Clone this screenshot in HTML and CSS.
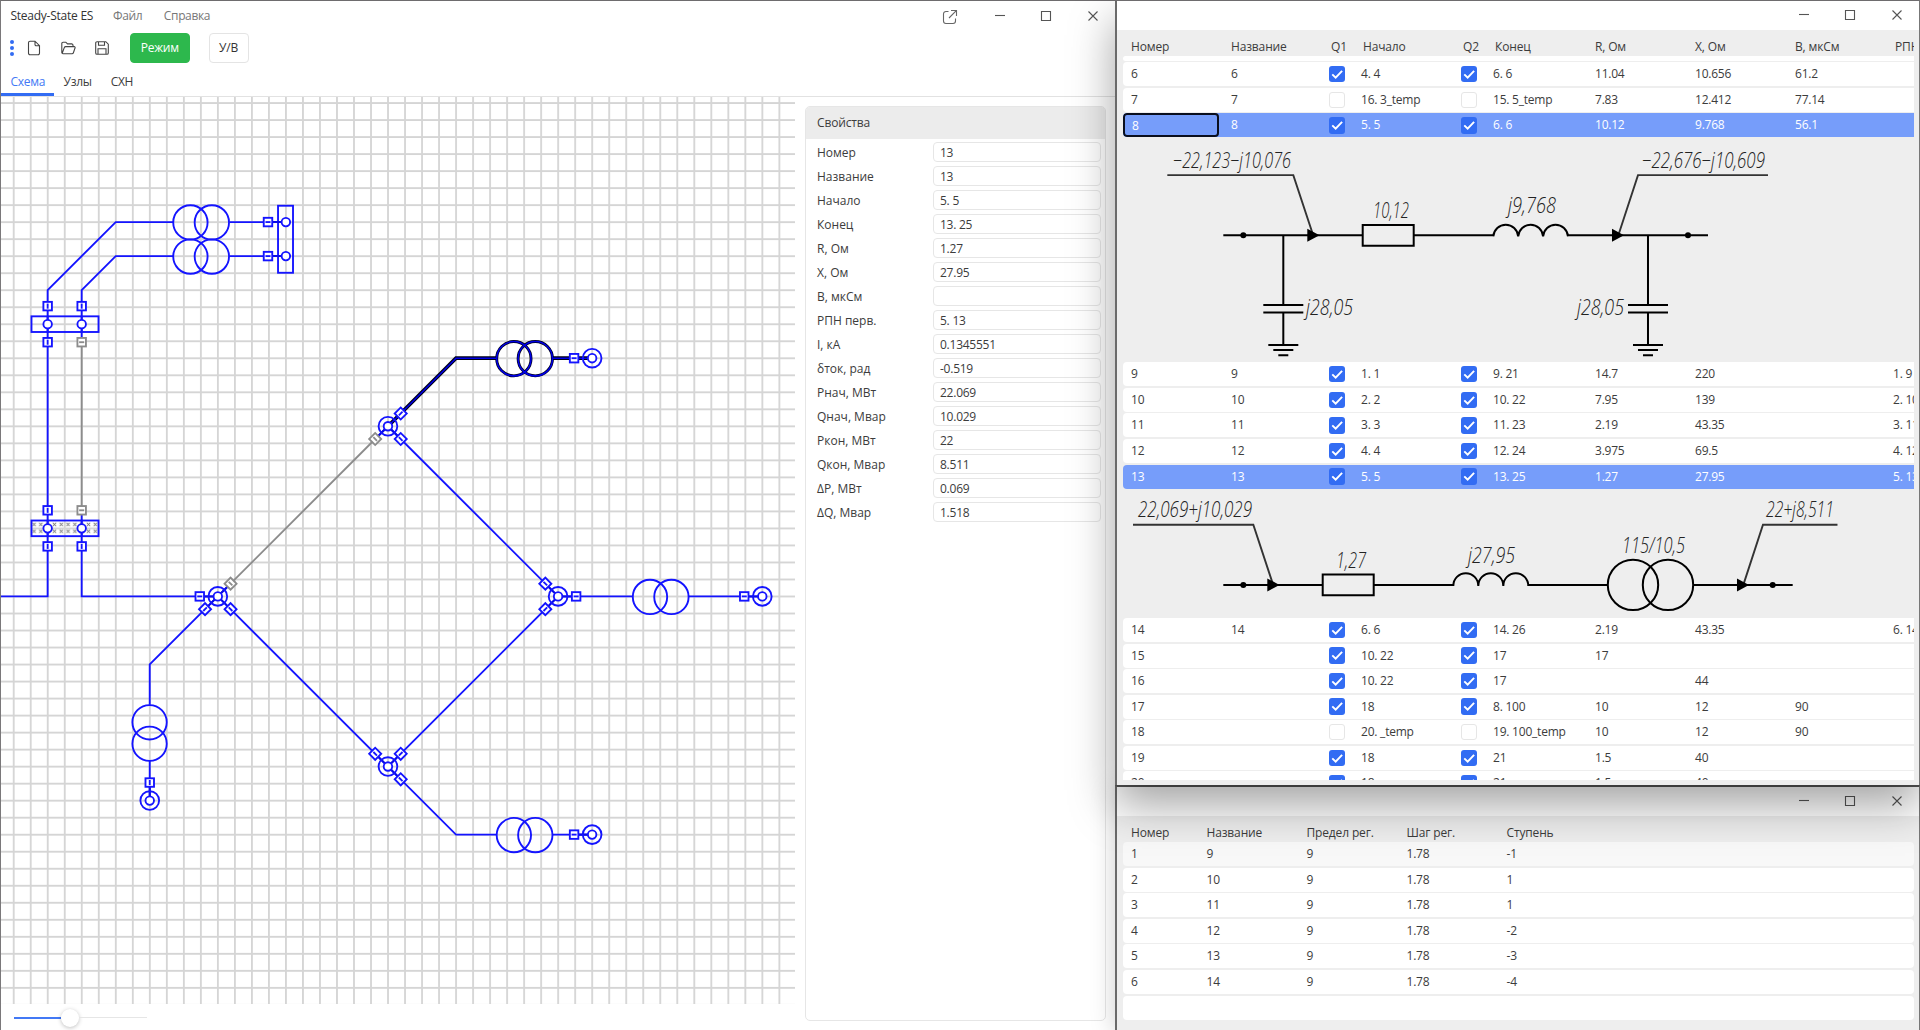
FILE: index.html
```html
<!DOCTYPE html>
<html lang="ru">
<head>
<meta charset="utf-8">
<title>Steady-State ES</title>
<link rel="stylesheet" href="styles.css">
</head>
<body>
<svg class="defs" width="0" height="0" aria-hidden="true">
  <defs>
    <symbol id="i-min" viewBox="0 0 12 12"><path d="M1 5.5H11"/></symbol>
    <symbol id="i-max" viewBox="0 0 12 12"><path d="M1.5 1.5h9v9h-9z"/></symbol>
    <symbol id="i-close" viewBox="0 0 12 12"><path d="M1.5 1.5l9 9M10.5 1.5l-9 9"/></symbol>
    <symbol id="i-check" viewBox="0 0 16 16"><path d="M3.2 8.2l3.3 3.2 6.3-6.6"/></symbol>
  </defs>
</svg>

<main class="desktop">
  <section class="window main-window">
    <header class="titlebar">
      <span class="app-name">Steady-State ES</span>
      <nav class="menu"><span>Файл</span><span>Справка</span></nav>
      <div class="controls">
        <svg class="share" viewBox="0 0 16 16"><path d="M6.5 2.5H4a2.5 2.5 0 0 0-2.5 2.5v7A2.5 2.5 0 0 0 4 14.5h7a2.5 2.5 0 0 0 2.5-2.5V9.500M9 1.500h5.500V7M14.300 1.700L7 9"/></svg>
        <svg><use href="#i-min"/></svg><svg class="max"><use href="#i-max"/></svg><svg><use href="#i-close"/></svg>
      </div>
    </header>
    <div class="toolbar">
      <svg class="grip" viewBox="0 0 4 16"><circle cx="2" cy="2" r="2"/><circle cx="2" cy="8" r="2"/><circle cx="2" cy="14" r="2"/></svg>
      <svg class="tool new" viewBox="0 0 16 16"><path d="M4 1.200h5l4.500 4.500v7.500a1.500 1.500 0 0 1-1.500 1.500H4a1.500 1.500 0 0 1-1.500-1.500V2.700A1.500 1.500 0 0 1 4 1.200zM9 1.200v3.300a1.200 1.200 0 0 0 1.200 1.200h3.300"/></svg>
      <svg class="tool open" viewBox="0 0 16 16"><path d="M1.800 12.800V3.500a1.300 1.300 0 0 1 1.300-1.300h2.700l1.700 1.700h4.200A1.300 1.300 0 0 1 13 5.200v1.300M2 13.800L4.300 7.600a1.500 1.500 0 0 1 1.400-1h8.500a.9.900 0 0 1 .9 1.200l-1.700 5a1.500 1.500 0 0 1-1.400 1H3a1.200 1.200 0 0 1-1.200-1.200"/></svg>
      <svg class="tool save" viewBox="0 0 16 16"><path d="M3 1.700h8.800l2.500 2.500V13a1.300 1.300 0 0 1-1.300 1.300H3A1.300 1.300 0 0 1 1.700 13V3A1.300 1.300 0 0 1 3 1.700zM4.500 1.700v3.600h6V1.700M4 14.300V8.800h8v5.500"/></svg>
      <button class="btn primary">Режим</button>
      <button class="btn">У/В</button>
    </div>
    <nav class="tabs"><span class="tab active">Схема</span><span class="tab">Узлы</span><span class="tab">СХН</span></nav>
    <div class="workspace">
      <div class="canvas-col">
        <svg class="scheme" viewBox="1 97 794 907">
          <defs>
            <pattern id="grid" x="-0.5" y="-0.5" width="10" height="10" patternUnits="userSpaceOnUse"><path class="grid-line" d="M0 .5H10M.5 0V10"/></pattern>
            <pattern id="hatch" x="-110" y="-44.300" width="4" height="4" patternUnits="userSpaceOnUse"><path class="hatch" d="M1 1L3 3M3 1L1 3"/></pattern>
            <g id="sw"><rect x="-2.500" y="-2.500" width="5" height="5"/><path d="M-1.500 0H1.500"/></g>
            <g id="node"><circle class="clear" r="5.500"/><circle r="2.500"/></g>
            <circle id="ring" r="2.500"/>
            <g id="tr"><circle cx="-6.300" r="10.100"/><circle cx="6.300" r="10.100"/></g>
          </defs>
          <g transform="translate(217.800 596.400) scale(1.7015)">
            <rect x="-130" y="-300" width="470" height="545" fill="url(#grid)"/>
            <g class="wire">
              <path d="M-100 -160V-180L-60 -220H-26M7 -220H40M-80 -160V-180L-60 -200H-26M7 -200H40"/>
              <path d="M-100 -160V0H-130M-80 -160V-150M-80 -50V0H0M0 0L100 100L200 0L100 -100M200 0H243.500M276.500 0H320M0 0L-40 40V63.700M-40 96.500V120M100 100L140 140H163.700M196.500 140H220M0 0L7 -7M100 -100L93 -93"/>
              <rect x="-109.500" y="-164.600" width="39.400" height="9.200"/>
              <rect x="-109.500" y="-44.600" width="39.400" height="9.200" fill="url(#hatch)"/>
              <rect x="35.400" y="-229.600" width="8.800" height="39.400"/>
              <path d="M-100 -165V-155M-80 -165V-155M-100 -45V-35M-80 -45V-35"/>
              <use href="#tr" x="-9.800" y="-219.800"/><use href="#tr" x="-9.800" y="-199.700"/>
              <use href="#tr" x="260.300" y=".3"/><use href="#tr" x="180.300" y="140.300"/>
              <use href="#tr" transform="translate(-40.100 80.300) rotate(90)"/>
            </g>
            <g class="off"><path d="M-80 -149.400V-50.600M7.500 -7.500L92.500 -92.500"/></g>
            <g class="picked"><path d="M100 -100L140 -140H163.700M196.800 -140H220"/><use class="picked-ring" href="#tr" x="180.300" y="-139.700"/></g>
            <g class="picked-core"><path d="M100 -100L140 -140H163.700M196.800 -140H220"/><use href="#tr" x="180.300" y="-139.700"/></g>
            <g class="stub"><path d="M31 -220H40M31 -200H40M-8 0H0M200 0H208M312 0H320M212 140H220M-40 112V120M0 0L6 6M0 0L-6 6M0 0L6 -6M100 100L94 94M100 100L106 94M100 100L106 106M200 0L194 -6M200 0L194 6M100 -100L106 -94M100 -100L94 -94"/></g>
            <g class="mark">
              <use href="#node"/><use href="#node" x="100" y="-100"/><use href="#node" x="200"/><use href="#node" x="100" y="100"/><use href="#node" x="320"/><use href="#node" x="220" y="-140"/><use href="#node" x="220" y="140"/><use href="#node" x="-40" y="120"/>
              <use href="#ring" x="-100" y="-160"/><use href="#ring" x="-80" y="-160"/><use href="#ring" x="-100" y="-40"/><use href="#ring" x="-80" y="-40"/><use href="#ring" x="40" y="-220"/><use href="#ring" x="40" y="-200"/>
              <use href="#sw" x="29.500" y="-220"/><use href="#sw" x="29.500" y="-200"/><use href="#sw" x="-10.600"/><use href="#sw" x="210.600"/><use href="#sw" x="309.400"/><use href="#sw" x="209.400" y="-140"/><use href="#sw" x="209.400" y="140"/>
              <use href="#sw" transform="translate(-100 -170.600) rotate(90)"/><use href="#sw" transform="translate(-80 -170.600) rotate(90)"/>
              <use href="#sw" transform="translate(-100 -149.400) rotate(90)"/><use href="#sw" transform="translate(-100 -50.600) rotate(90)"/>
              <use href="#sw" transform="translate(-100 -29.400) rotate(90)"/><use href="#sw" transform="translate(-80 -29.400) rotate(90)"/>
              <use href="#sw" transform="translate(-40 109.400) rotate(90)"/>
              <use href="#sw" transform="translate(-7.500 7.500) rotate(-45)"/><use href="#sw" transform="translate(7.500 7.500) rotate(45)"/>
              <use href="#sw" transform="translate(92.500 92.500) rotate(45)"/><use href="#sw" transform="translate(107.500 92.500) rotate(-45)"/><use href="#sw" transform="translate(107.500 107.500) rotate(45)"/>
              <use href="#sw" transform="translate(192.500 -7.500) rotate(45)"/><use href="#sw" transform="translate(192.500 7.500) rotate(-45)"/>
              <use href="#sw" transform="translate(107.500 -107.500) rotate(-45)"/><use href="#sw" transform="translate(107.500 -92.500) rotate(45)"/>
            </g>
            <g class="mark off">
              <use href="#sw" x="-80" y="-149.400"/><use href="#sw" x="-80" y="-50.600"/>
              <use href="#sw" transform="translate(7.500 -7.500) rotate(45)"/><use href="#sw" transform="translate(92.500 -92.500) rotate(45)"/>
            </g>
          </g>
        </svg>
        <div class="slider"><div class="slider-fill"></div><div class="slider-thumb"></div><div class="slider-rest"></div></div>
      </div>
      <aside class="props">
        <h2>Свойства</h2>
        <dl>
          <dt>Номер</dt><dd>13</dd>
          <dt>Название</dt><dd>13</dd>
          <dt>Начало</dt><dd>5. 5</dd>
          <dt>Конец</dt><dd>13. 25</dd>
          <dt>R, Ом</dt><dd>1.27</dd>
          <dt>X, Ом</dt><dd>27.95</dd>
          <dt>B, мкСм</dt><dd></dd>
          <dt>РПН перв.</dt><dd>5. 13</dd>
          <dt>I, кА</dt><dd>0.1345551</dd>
          <dt>δток, рад</dt><dd>-0.519</dd>
          <dt>Pнач, МВт</dt><dd>22.069</dd>
          <dt>Qнач, Мвар</dt><dd>10.029</dd>
          <dt>Pкон, МВт</dt><dd>22</dd>
          <dt>Qкон, Мвар</dt><dd>8.511</dd>
          <dt>ΔP, МВт</dt><dd>0.069</dd>
          <dt>ΔQ, Мвар</dt><dd>1.518</dd>
        </dl>
      </aside>
    </div>
  </section>

  <div class="side">
    <section class="window branches">
      <header class="titlebar"><div class="controls"><svg><use href="#i-min"/></svg><svg class="max"><use href="#i-max"/></svg><svg><use href="#i-close"/></svg></div></header>
      <div class="table wide">
        <div class="head"><span>Номер</span><span>Название</span><span>Q1</span><span>Начало</span><span>Q2</span><span>Конец</span><span>R, Ом</span><span>X, Ом</span><span>B, мкСм</span><span>РПН</span></div>
        <div class="rows">
          <div class="row-tail"></div>
          <div class="row"><span>6</span><span>6</span><svg class="cb on"><use href="#i-check"/></svg><span class="n">4. 4</span><svg class="cb on"><use href="#i-check"/></svg><span class="n">6. 6</span><span>11.04</span><span>10.656</span><span>61.2</span><span></span></div>
          <div class="row"><span>7</span><span>7</span><svg class="cb"></svg><span class="n">16. 3_temp</span><svg class="cb"></svg><span class="n">15. 5_temp</span><span>7.83</span><span>12.412</span><span>77.14</span><span></span></div>
          <div class="row sel"><span class="focus">8</span><span>8</span><svg class="cb on"><use href="#i-check"/></svg><span class="n">5. 5</span><svg class="cb on"><use href="#i-check"/></svg><span class="n">6. 6</span><span>10.12</span><span>9.768</span><span>56.1</span><span></span></div>
          <svg class="detail line" viewBox="1123 137.700 790.600 221.700">
            <path d="M1223.300 234H1362.700M1413.700 234H1493.300V235A12.500 12.700 0 0 1 1518.200 235A12.500 12.700 0 0 1 1543.100 235A12.500 12.700 0 0 1 1568 235V234H1708M1362.700 223.700h51v20.700h-51z"/>
            <path d="M1283.300 234V303.700M1263.300 303.700H1303.300M1263.300 311.300H1303.300M1283.300 311.300V343.700M1268.300 343.700H1298.300M1273.300 348.700H1293.300M1278.300 354H1288.300M1648 234V303.700M1628 303.700H1668M1628 311.300H1668M1648 311.300V343.700M1633 343.700H1663M1638 348.700H1658M1643 354H1653"/>
            <path class="leader" d="M1167.300 173.800H1293.300L1312.500 232M1768 173.800H1638L1619 232"/>
            <path class="solid" d="M1307.300 227.500L1319.500 234L1307.300 240.500zM1612 227.500L1624 234L1612 240.500z"/>
            <circle class="solid" cx="1243.300" cy="234" r="3"/><circle class="solid" cx="1688" cy="234" r="3"/>
            <text x="1173" y="166.700" textLength="118" lengthAdjust="spacingAndGlyphs">−22,123−j10,076</text>
            <text x="1642" y="166.700" textLength="123" lengthAdjust="spacingAndGlyphs">−22,676−j10,609</text>
            <text x="1373" y="216.700" textLength="36" lengthAdjust="spacingAndGlyphs">10,12</text>
            <text x="1508" y="212" textLength="48" lengthAdjust="spacingAndGlyphs">j9,768</text>
            <text x="1306" y="313.500" textLength="47" lengthAdjust="spacingAndGlyphs">j28,05</text>
            <text x="1577" y="313.500" textLength="47" lengthAdjust="spacingAndGlyphs">j28,05</text>
          </svg>
          <div class="row"><span>9</span><span>9</span><svg class="cb on"><use href="#i-check"/></svg><span class="n">1. 1</span><svg class="cb on"><use href="#i-check"/></svg><span class="n">9. 21</span><span>14.7</span><span>220</span><span></span><span class="n">1. 9</span></div>
          <div class="row"><span>10</span><span>10</span><svg class="cb on"><use href="#i-check"/></svg><span class="n">2. 2</span><svg class="cb on"><use href="#i-check"/></svg><span class="n">10. 22</span><span>7.95</span><span>139</span><span></span><span class="n">2. 10</span></div>
          <div class="row"><span>11</span><span>11</span><svg class="cb on"><use href="#i-check"/></svg><span class="n">3. 3</span><svg class="cb on"><use href="#i-check"/></svg><span class="n">11. 23</span><span>2.19</span><span>43.35</span><span></span><span class="n">3. 11</span></div>
          <div class="row"><span>12</span><span>12</span><svg class="cb on"><use href="#i-check"/></svg><span class="n">4. 4</span><svg class="cb on"><use href="#i-check"/></svg><span class="n">12. 24</span><span>3.975</span><span>69.5</span><span></span><span class="n">4. 12</span></div>
          <div class="row sel"><span>13</span><span>13</span><svg class="cb on"><use href="#i-check"/></svg><span class="n">5. 5</span><svg class="cb on"><use href="#i-check"/></svg><span class="n">13. 25</span><span>1.27</span><span>27.95</span><span></span><span class="n">5. 13</span></div>
          <svg class="detail transformer" viewBox="1123 490.100 790.600 126.100">
            <path d="M1223.300 585H1322.700M1373.700 585H1453.300V586A12.500 12.700 0 0 1 1478.300 586A12.500 12.700 0 0 1 1503.300 586A12.500 12.700 0 0 1 1528.300 586V585H1607.700M1693.300 585H1792.700M1322.700 574.700h51v20.700h-51z"/>
            <circle cx="1633" cy="585" r="25.200"/><circle cx="1668" cy="585" r="25.200"/>
            <path class="leader" d="M1133 524.800H1253.300L1272.500 583M1837.500 524.800H1763L1744 583"/>
            <path class="solid" d="M1267.300 578.500L1279.500 585L1267.300 591.500zM1737 578.500L1749 585L1737 591.500z"/>
            <circle class="solid" cx="1243.300" cy="585" r="3"/><circle class="solid" cx="1772.700" cy="585" r="3"/>
            <text x="1138" y="517.300" textLength="114" lengthAdjust="spacingAndGlyphs">22,069+j10,029</text>
            <text x="1336" y="568" textLength="30" lengthAdjust="spacingAndGlyphs">1,27</text>
            <text x="1468" y="563.300" textLength="47" lengthAdjust="spacingAndGlyphs">j27,95</text>
            <text x="1622" y="553" textLength="63" lengthAdjust="spacingAndGlyphs">115/10,5</text>
            <text x="1766" y="517.300" textLength="68" lengthAdjust="spacingAndGlyphs">22+j8,511</text>
          </svg>
          <div class="row"><span>14</span><span>14</span><svg class="cb on"><use href="#i-check"/></svg><span class="n">6. 6</span><svg class="cb on"><use href="#i-check"/></svg><span class="n">14. 26</span><span>2.19</span><span>43.35</span><span></span><span class="n">6. 14</span></div>
          <div class="row"><span>15</span><span></span><svg class="cb on"><use href="#i-check"/></svg><span class="n">10. 22</span><svg class="cb on"><use href="#i-check"/></svg><span class="n">17</span><span>17</span><span></span><span></span><span></span></div>
          <div class="row"><span>16</span><span></span><svg class="cb on"><use href="#i-check"/></svg><span class="n">10. 22</span><svg class="cb on"><use href="#i-check"/></svg><span class="n">17</span><span></span><span>44</span><span></span><span></span></div>
          <div class="row"><span>17</span><span></span><svg class="cb on"><use href="#i-check"/></svg><span class="n">18</span><svg class="cb on"><use href="#i-check"/></svg><span class="n">8. 100</span><span>10</span><span>12</span><span>90</span><span></span></div>
          <div class="row"><span>18</span><span></span><svg class="cb"></svg><span class="n">20. _temp</span><svg class="cb"></svg><span class="n">19. 100_temp</span><span>10</span><span>12</span><span>90</span><span></span></div>
          <div class="row"><span>19</span><span></span><svg class="cb on"><use href="#i-check"/></svg><span class="n">18</span><svg class="cb on"><use href="#i-check"/></svg><span class="n">21</span><span>1.5</span><span>40</span><span></span><span></span></div>
          <div class="row"><span>20</span><span></span><svg class="cb on"><use href="#i-check"/></svg><span class="n">18</span><svg class="cb on"><use href="#i-check"/></svg><span class="n">21</span><span>1.5</span><span>40</span><span></span><span></span></div>
        </div>
      </div>
    </section>

    <section class="window taps">
      <header class="titlebar"><div class="controls"><svg><use href="#i-min"/></svg><svg class="max"><use href="#i-max"/></svg><svg><use href="#i-close"/></svg></div></header>
      <div class="table narrow">
        <div class="head"><span>Номер</span><span>Название</span><span>Предел рег.</span><span>Шаг рег.</span><span>Ступень</span></div>
        <div class="rows">
          <div class="row hover"><span>1</span><span>9</span><span>9</span><span>1.78</span><span>-1</span></div>
          <div class="row"><span>2</span><span>10</span><span>9</span><span>1.78</span><span>1</span></div>
          <div class="row"><span>3</span><span>11</span><span>9</span><span>1.78</span><span>1</span></div>
          <div class="row"><span>4</span><span>12</span><span>9</span><span>1.78</span><span>-2</span></div>
          <div class="row"><span>5</span><span>13</span><span>9</span><span>1.78</span><span>-3</span></div>
          <div class="row"><span>6</span><span>14</span><span>9</span><span>1.78</span><span>-4</span></div>
          <div class="row"></div>
        </div>
      </div>
    </section>
  </div>
</main>
</body>
</html>
```
FILE: styles.css
```css
* { box-sizing: border-box; }

body {
  margin: 0;
  width: 1920px;
  height: 1030px;
  overflow: hidden;
  font: 12px/16px "Open Sans", "Noto Sans", sans-serif;
  letter-spacing: -0.22px;
  color: #3c3c3c;
  background: #fff;
}

.defs { position: absolute; }
.desktop { display: flex; height: 1030px; }

.window { display: flex; flex-direction: column; border-top: 1px solid #6e6c6e; }
.main-window { width: 1115px; border-left: 1px solid #7a787a; background: #fff; }

.side { display: flex; flex-direction: column; width: 805px; }
.side .window {
  background: #eee;
  border-left: 2px solid #6a6a6a;
  border-right: 1px solid #777;
}
.branches {
  position: relative;
  z-index: 2;
  height: 785px;
  box-shadow: 0 20px 42px rgba(0, 0, 0, .36);
}
.taps {
  position: relative;
  z-index: 1;
  flex: 1;
  box-shadow: 0 2px 24px rgba(0, 0, 0, .2);
}
.side .taps { border-top: 2px solid #555; }

/* title bars */
.titlebar { display: flex; align-items: center; flex: none; height: 29px; background: #fff; }
.side .titlebar { padding-bottom: 1px; }
.main-window .titlebar { height: 30px; padding-left: 9.500px; }
.app-name { width: 102.500px; color: #333; letter-spacing: -0.25px; }
.menu { display: flex; gap: 21.500px; color: #777; letter-spacing: -0.35px; }
.controls { display: flex; align-items: center; gap: 34.500px; margin-left: auto; padding-right: 16px; }
.controls svg { width: 12px; height: 12px; fill: none; stroke: #555; stroke-width: 1.1; }
.controls .max { margin: 0 1px 0 -1px; }
.controls .share { width: 16px; height: 16px; margin: 1px 2px 0 0; stroke: #666; }

/* toolbar */
.toolbar { display: flex; align-items: center; flex: none; height: 34px; padding-left: 9px; }
.grip { width: 4px; height: 16px; fill: #326cf3; }
.tool { width: 16px; height: 16px; fill: none; stroke: #444; stroke-width: 1.1; }
.new { margin-left: 11.500px; }
.open { margin-left: 18.500px; }
.save { margin-left: 18px; }
.btn {
  width: 40px;
  height: 30px;
  padding: 0;
  font: inherit;
  letter-spacing: inherit;
  color: #333;
  background: #fff;
  border: 1px solid #e4e4e4;
  border-radius: 4px;
}
.btn.primary { width: 59.500px; margin: 0 19px 0 20px; color: #fff; background: #2db84d; border-color: #2db84d; }

/* tabs */
.tabs { display: flex; flex: none; height: 32px; border-bottom: 1px solid #e2e2e2; letter-spacing: -0.3px; }
.tab { padding: 9px 9.500px 0; border-bottom: 3px solid transparent; }
.tab.active { padding-right: 9px; color: #4379f5; border-color: #326cf3; }

/* network diagram */
.workspace { display: flex; flex: 1; min-height: 0; }
.canvas-col { width: 794px; }
.scheme { display: block; width: 794px; height: 907px; }
.grid-line { fill: none; stroke: #d5d5d5; stroke-width: 1.15; }
.hatch { fill: none; stroke: #777; stroke-width: .6; }
.wire { fill: none; stroke: #1414ff; stroke-width: 1.1; }
.stub { fill: none; stroke: #0a0ae6; stroke-width: 1.2; }
.off { fill: none; stroke: #8c8c8c; stroke-width: 1.1; }
.picked { fill: none; stroke: #000014; stroke-width: 2.200; }
.picked-ring { stroke-width: 1.700; }
.picked-core { fill: none; stroke: #0000e6; stroke-width: .9; }
.mark { fill: #fff; stroke: #1414ff; stroke-width: 1.1; }
.mark.off { stroke: #8c8c8c; }
.clear { fill: none; }

.slider { display: flex; align-items: center; width: 133px; height: 20px; margin: 3.500px 0 0 13px; }
.slider-fill { width: 47px; height: 2px; background: #4379f5; }
.slider-thumb { width: 18px; height: 18px; border-radius: 50%; background: #fff; box-shadow: 0 1px 4px rgba(0, 0, 0, .25); }
.slider-rest { flex: 1; height: 1px; background: #e6e6e6; }

/* properties */
.props { width: 301px; height: 915px; margin: 9px 0 0 10px; border: 1px solid #e6e6e6; border-radius: 5px; overflow: hidden; letter-spacing: 0; }
.props h2 { margin: 0; height: 32px; padding: 8px 11px; background: #ececec; font: inherit; letter-spacing: -0.15px; }
.props dl { display: grid; grid-template-columns: 116px 168px; grid-auto-rows: 20px; row-gap: 4px; margin: 3px 0 0 11px; }
.props dt { line-height: 21px; }
.props dd { margin: 0; padding-left: 6px; line-height: 19px; letter-spacing: -0.25px; border: 1px solid #e6e6e6; border-radius: 4px; }

/* tables */
.table { padding: 0 5px 0 6px; }
.head, .row { display: grid; }
.wide .head, .wide .row { grid-template-columns: 100px 100px 32px 100px 32px 100px 100px 100px 100px 27px; }
.narrow .head, .narrow .row { grid-template-columns: 75.500px repeat(3, 100px) 1fr; }
.head { height: 26px; padding-top: 8.500px; letter-spacing: -0.15px; }
.head span, .row span { padding-left: 8px; white-space: nowrap; overflow: hidden; }
.row span.n { padding-left: 6px; }
.row {
  height: 24px;
  margin-bottom: 1.600px;
  line-height: 24px;
  background: #fff;
  border-radius: 4px;
  overflow: hidden;
}
.wide .rows { height: 724px; overflow: hidden; }
.wide .row, .row-tail { border-radius: 4px 0 0 4px; }
.row-tail { height: 4.500px; margin-bottom: 1.700px; background: #fff; }
.row.sel { color: #fff; background: #769dfa; }
.row.hover { background: #f8f8f8; }
.row .focus { padding-left: 7px; line-height: 22px; width: 96px; border: 2px solid #0a0f1e; border-radius: 4px; }
.cb { width: 16.400px; height: 16.400px; margin: 3.800px 0 0 6px; border: 1px solid #e6e6e6; border-radius: 3px; }
.cb.on { background: #326cf3; border: 0; fill: none; stroke: #fff; stroke-width: 1.900; }

/* equivalent circuits */
.detail { display: block; width: 790.600px; margin-bottom: 1.600px; fill: none; stroke: #000; stroke-width: 2; }
.line { height: 221.700px; }
.transformer { height: 126.100px; }
.leader { stroke: #333; stroke-width: 1.900; }
.solid { fill: #000; stroke: none; }
.detail text { font: italic 300 22px "Open Sans", "Noto Sans", sans-serif; letter-spacing: 0; fill: #222; stroke: none; }
```
